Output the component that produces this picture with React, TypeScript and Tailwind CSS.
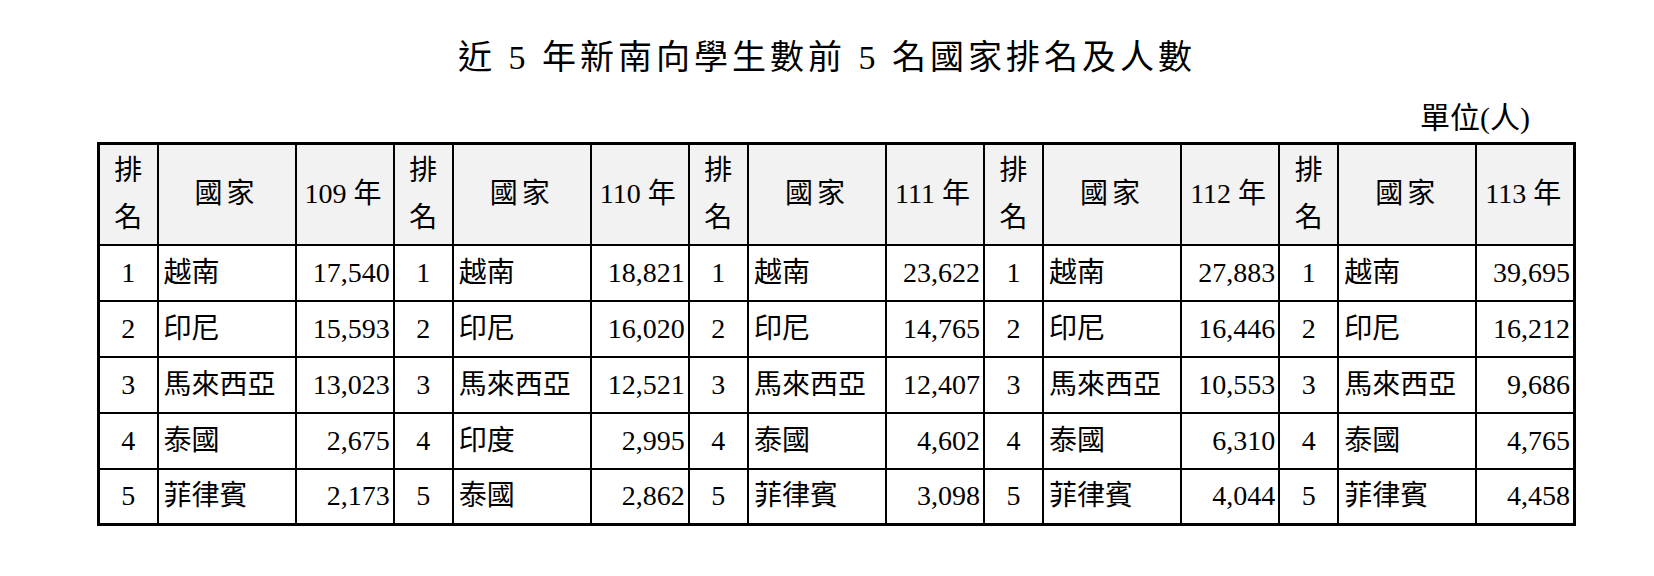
const years = ['109', '110', '111', '112', '113'];

// each year block: [country, count] for rank 1..5
const data: [string, string][][] = [
  [['越南', '17,540'], ['印尼', '15,593'], ['馬來西亞', '13,023'], ['泰國', '2,675'], ['菲律賓', '2,173']],
  [['越南', '18,821'], ['印尼', '16,020'], ['馬來西亞', '12,521'], ['印度', '2,995'], ['泰國', '2,862']],
  [['越南', '23,622'], ['印尼', '14,765'], ['馬來西亞', '12,407'], ['泰國', '4,602'], ['菲律賓', '3,098']],
  [['越南', '27,883'], ['印尼', '16,446'], ['馬來西亞', '10,553'], ['泰國', '6,310'], ['菲律賓', '4,044']],
  [['越南', '39,695'], ['印尼', '16,212'], ['馬來西亞', '9,686'], ['泰國', '4,765'], ['菲律賓', '4,458']],
];

const font = { fontFamily: '"Liberation Serif", "Noto Sans CJK TC", serif' };

export default function App() {
  return (
    <div className="w-[1654px] h-[576px] bg-white text-black" style={font}>
      <div className="pt-[38px] text-center text-[34px] leading-[40px] tracking-[4px]">
        近 5 年新南向學生數前 5 名國家排名及人數
      </div>

      <div className="ml-[97px] w-[1479px]">
        <div className="mt-[22px] pr-[46px] text-right text-[30px] leading-[36px]">單位(人)</div>

        <table className="mt-[6px] w-[1479px] table-fixed border-collapse border-[3px] border-black text-[28px]">
          <colgroup>
            {years.map((y) => [
              <col key={y + 'a'} className="w-[59px]" />,
              <col key={y + 'b'} className="w-[138px]" />,
              <col key={y + 'c'} className="w-[98px]" />,
            ])}
          </colgroup>
          <thead>
            <tr className="h-[101px] bg-[#f2f2f2]">
              {years.map((y) => [
                <th key={y + 'a'} className="border-2 border-black font-normal leading-[47px] p-0">
                  排<br />名
                </th>,
                <th key={y + 'b'} className="border-2 border-black font-normal tracking-[4px] p-0">
                  國家
                </th>,
                <th key={y + 'c'} className="border-2 border-black font-normal text-left pl-[8px] py-0 pr-0 whitespace-nowrap">
                  {y} 年
                </th>,
              ])}
            </tr>
          </thead>
          <tbody>
            {[0, 1, 2, 3, 4].map((r) => (
              <tr key={r} className="h-[56px]">
                {data.map((col, c) => [
                  <td key={c + 'a'} className="border-2 border-black text-center p-0 leading-[32px]">
                    {r + 1}
                  </td>,
                  <td key={c + 'b'} className="border-2 border-black pl-[5px] py-0 pr-0 leading-[32px] whitespace-nowrap">
                    {col[r][0]}
                  </td>,
                  <td key={c + 'c'} className="border-2 border-black text-right pr-[3px] pl-0 py-0 leading-[32px] whitespace-nowrap">
                    {col[r][1]}
                  </td>,
                ])}
              </tr>
            ))}
          </tbody>
        </table>
      </div>
    </div>
  );
}
